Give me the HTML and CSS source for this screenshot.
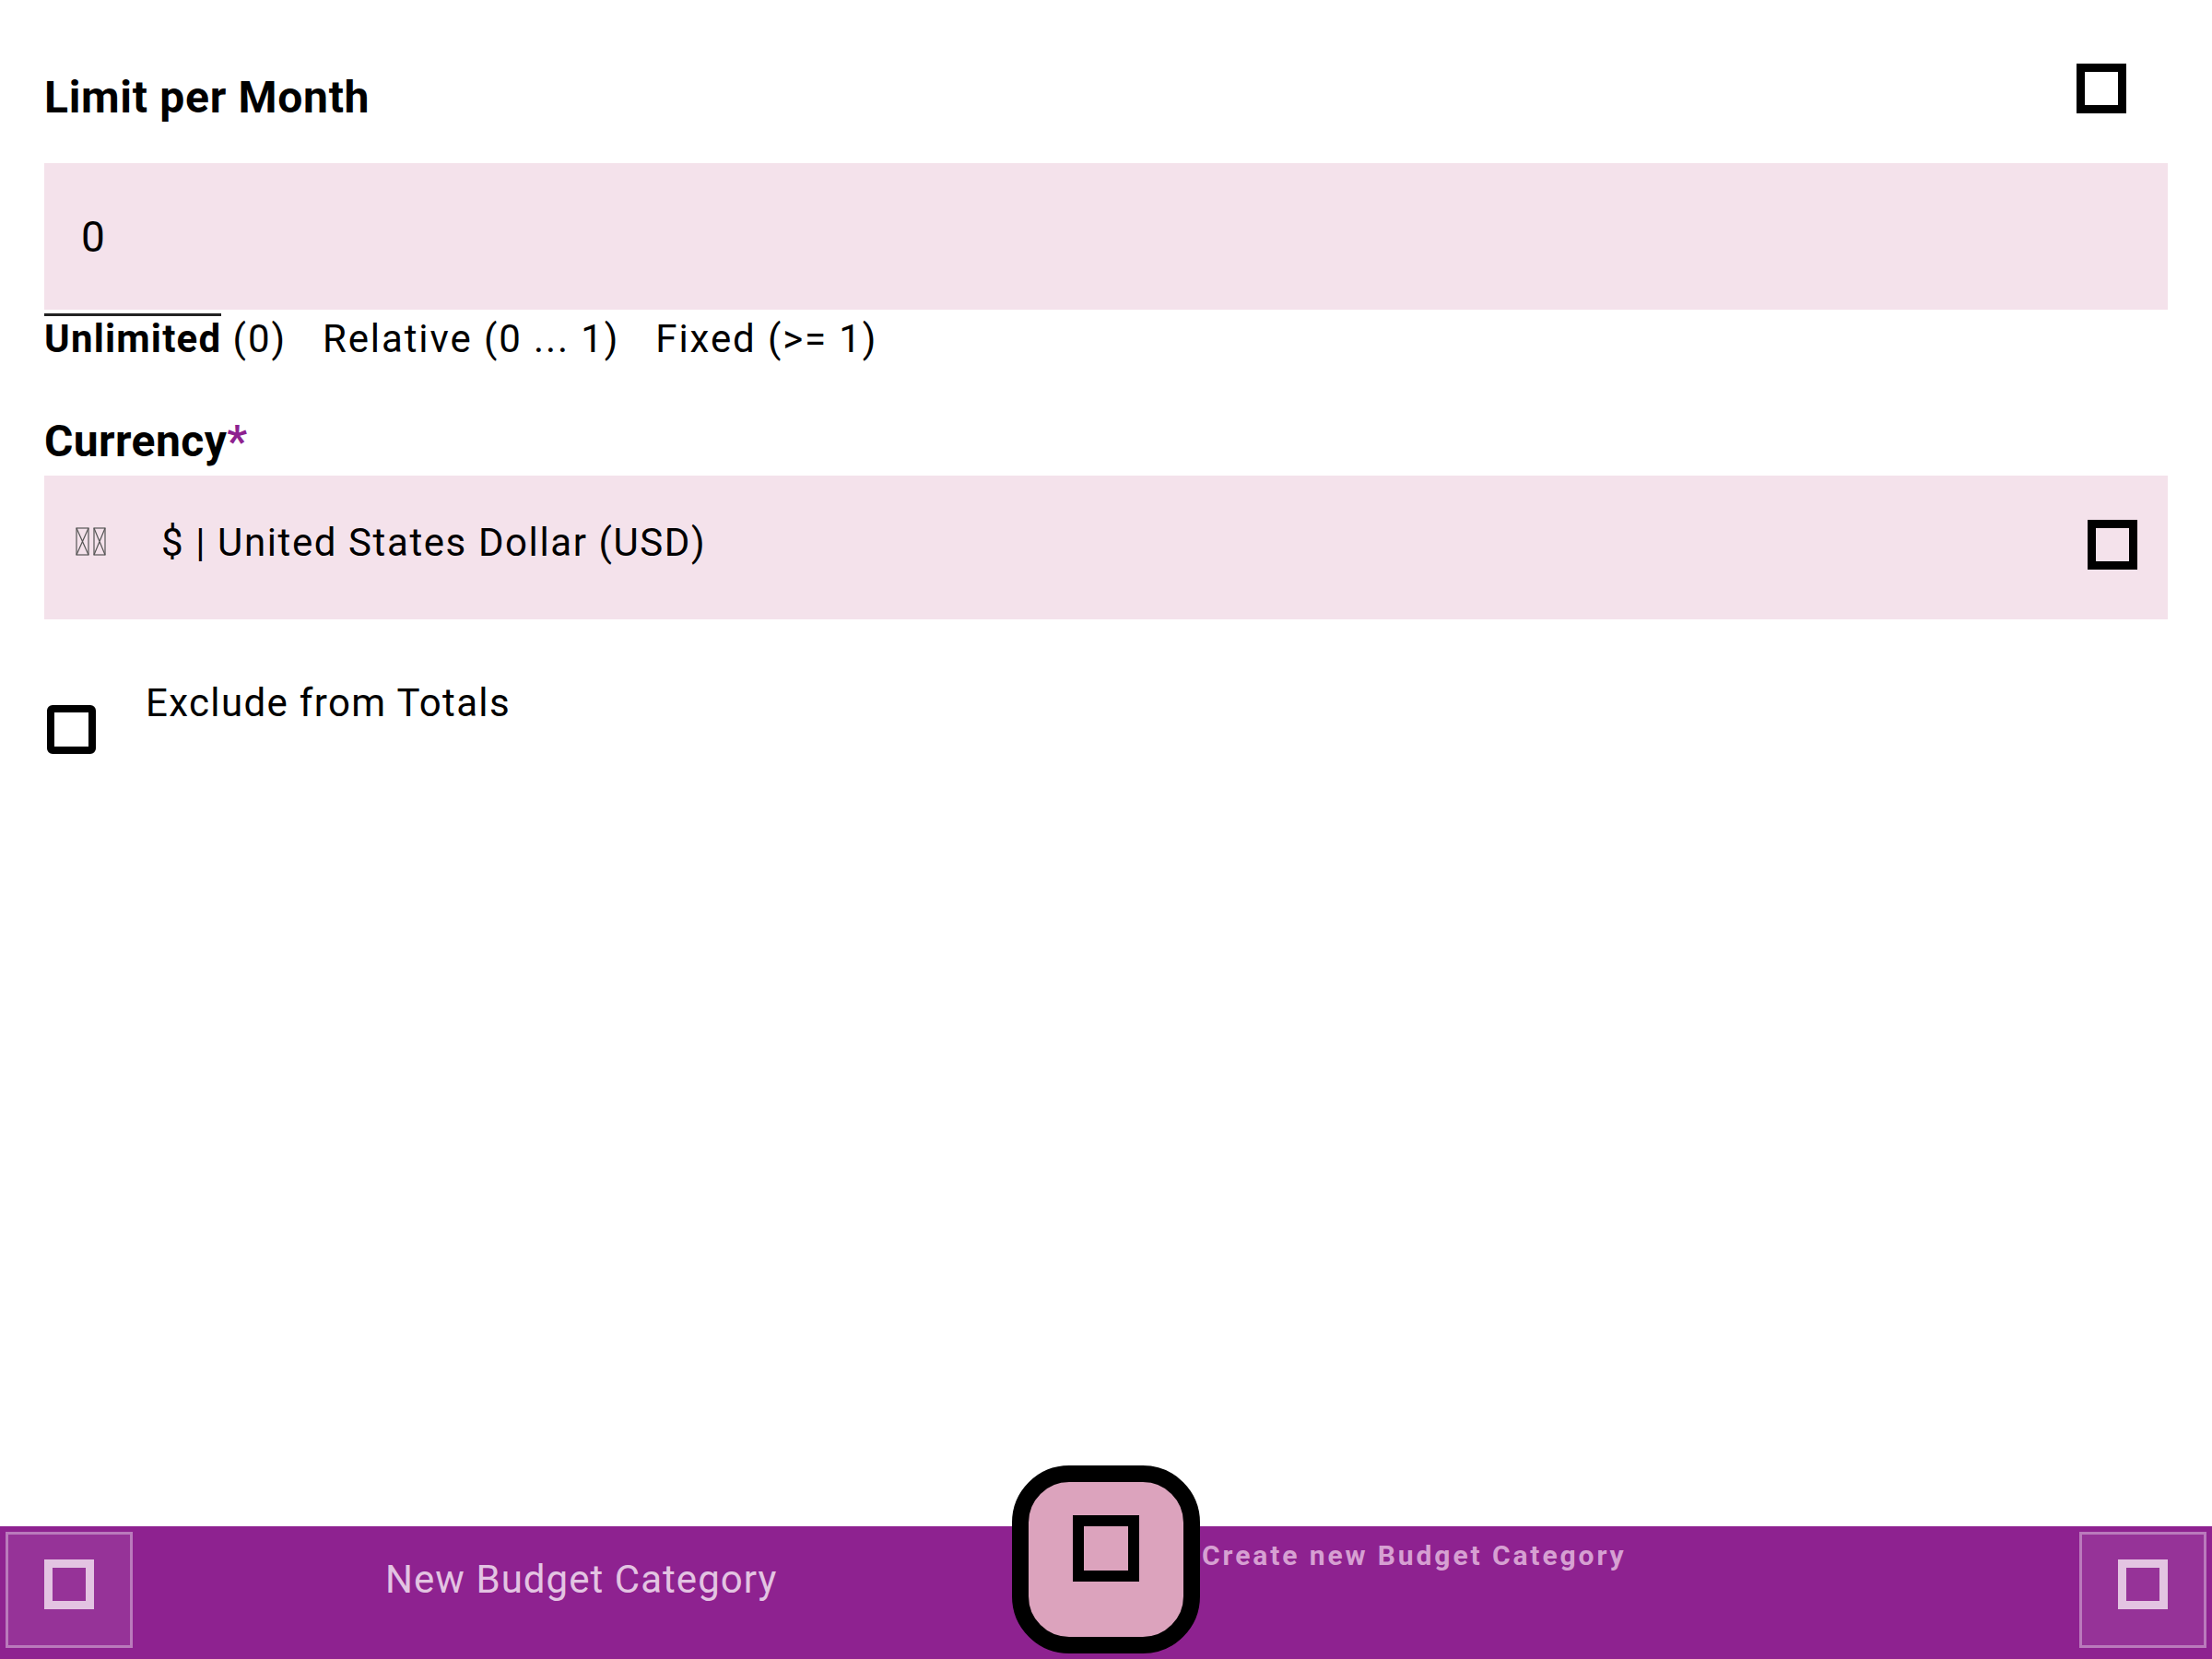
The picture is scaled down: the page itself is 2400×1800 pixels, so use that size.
FILE: index.html
```html
<!DOCTYPE html>
<html>
<head>
<meta charset="utf-8">
<title>New Budget Category</title>
<link rel="stylesheet" href="styles.css">
</head>
<body>
<div class="page">
  <main class="content">
    <div class="head">
      <div class="title">Limit per Month</div>
      <div class="icon-btn"><span class="tofu"></span></div>
    </div>
    <div class="field field-limit">
      <span class="value">0</span>
    </div>
    <div class="options">
      <span class="opt"><span class="opt-sel">Unlimited</span> (0)</span>
      <span class="opt">Relative (0 ... 1)</span>
      <span class="opt">Fixed (&gt;= 1)</span>
    </div>
    <div class="label">Currency<span class="req">*</span></div>
    <div class="field field-currency">
      <svg class="flag" width="34" height="32" viewBox="0 0 34 32" aria-hidden="true">
        <g fill="none" stroke="#555" stroke-width="1.2">
          <rect x="1" y="1" width="13" height="29"/>
          <path d="M1 1 L14 30 M14 1 L1 30"/>
          <rect x="20" y="1" width="12" height="29"/>
          <path d="M20 1 L32 30 M32 1 L20 30"/>
        </g>
      </svg>
      <span class="cur-text">$ | United States Dollar (USD)</span>
      <span class="drop"><span class="tofu"></span></span>
    </div>
    <div class="check-row">
      <span class="checkbox"></span>
      <span class="check-label">Exclude from Totals</span>
    </div>
  </main>
  <footer class="bar">
    <div class="bar-btn"><span class="tofu tofu-light"></span></div>
    <div class="bar-title">New Budget Category</div>
    <div class="bar-spacer"></div>
    <div class="bar-btn"><span class="tofu tofu-light"></span></div>
    <div class="fab"><span class="fab-icon"></span></div>
    <div class="fab-label">Create new Budget Category</div>
  </footer>
</div>
</body>
</html>
```

FILE: styles.css
```css
html, body {
  margin: 0;
  padding: 0;
  background: #ffffff;
}
body {
  font-family: Roboto, "Noto Sans", "DejaVu Sans", sans-serif;
  color: #000;
}
.page {
  width: 2400px;
  height: 1800px;
  display: flex;
  flex-direction: column;
  overflow: hidden;
}
.content {
  flex: 1;
  padding: 0 48px;
}
.head {
  display: flex;
  justify-content: space-between;
  align-items: flex-start;
  height: 168px;
}
.title {
  margin-top: 82px;
  font-size: 48px;
  line-height: 48px;
  font-weight: 700;
  letter-spacing: 0.7px;
}
.icon-btn {
  width: 144px;
  height: 144px;
  margin-top: 24px;
  display: flex;
  align-items: center;
  justify-content: center;
}
.tofu {
  display: block;
  width: 54px;
  height: 54px;
  box-sizing: border-box;
  border: 9px solid #000;
}
.tofu-light {
  border-color: #e3c4e2;
}
.field {
  background: #f4e2eb;
  display: flex;
  box-sizing: border-box;
}
.field-limit {
  margin-top: 9px;
  height: 159px;
  padding-left: 40px;
  align-items: center;
}
.value {
  font-size: 46px;
  line-height: 46px;
  letter-spacing: 1.4px;
}
.options {
  margin-top: 11px;
  font-size: 42px;
  line-height: 42px;
  letter-spacing: 1.9px;
  display: flex;
  gap: 39px;
}
.opt-sel {
  font-weight: 700;
  border-top: 3px solid #222;
  letter-spacing: 1.2px;
}
.label {
  margin-top: 66px;
  font-size: 48px;
  line-height: 48px;
  font-weight: 700;
  letter-spacing: 0.4px;
}
.req {
  color: #8e2290;
}
.field-currency {
  margin-top: 13px;
  height: 156px;
  align-items: flex-start;
  padding-left: 34px;
  padding-right: 24px;
}
.flag {
  margin-top: 56px;
  flex: none;
}
.cur-text {
  margin-top: 52px;
  margin-left: 59px;
  font-size: 42px;
  line-height: 42px;
  letter-spacing: 1.6px;
}
.drop {
  margin-left: auto;
  margin-top: 39px;
  width: 72px;
  height: 72px;
  display: flex;
  align-items: center;
  justify-content: center;
}
.check-row {
  display: flex;
  align-items: flex-start;
}
.checkbox {
  margin-top: 93px;
  margin-left: 3px;
  width: 53px;
  height: 53px;
  box-sizing: border-box;
  border: 8px solid #000;
  border-radius: 6px;
  flex: none;
}
.check-label {
  margin-top: 70px;
  margin-left: 54px;
  font-size: 42px;
  line-height: 42px;
  letter-spacing: 1.35px;
}
.bar {
  position: relative;
  height: 144px;
  flex: none;
  background: #8e2290;
  display: flex;
  align-items: flex-start;
  padding: 6px;
  box-sizing: border-box;
}
.bar-btn {
  width: 138px;
  height: 126px;
  box-sizing: border-box;
  border: 3px solid rgba(255, 255, 255, 0.35);
  background: rgba(255, 255, 255, 0.08);
  display: flex;
  align-items: center;
  justify-content: center;
  padding-bottom: 12px;
  flex: none;
}
.bar-title {
  margin-left: 274px;
  margin-top: 31px;
  font-size: 42px;
  line-height: 42px;
  letter-spacing: 1.05px;
  color: #e3c4e2;
}
.bar-spacer {
  flex: 1;
}
.fab {
  position: absolute;
  left: 1098px;
  top: -66px;
  width: 204px;
  height: 204px;
  box-sizing: border-box;
  border: 18px solid #000;
  border-radius: 62px;
  background: #dca3bd;
  display: flex;
  justify-content: center;
  padding-top: 36px;
}
.fab-icon {
  display: block;
  width: 72px;
  height: 72px;
  box-sizing: border-box;
  border: 12px solid #000;
}
.fab-label {
  position: absolute;
  left: 1304px;
  top: 17px;
  font-size: 30px;
  line-height: 30px;
  font-weight: 700;
  letter-spacing: 2.9px;
  color: #d6a0d2;
  white-space: nowrap;
}
```
